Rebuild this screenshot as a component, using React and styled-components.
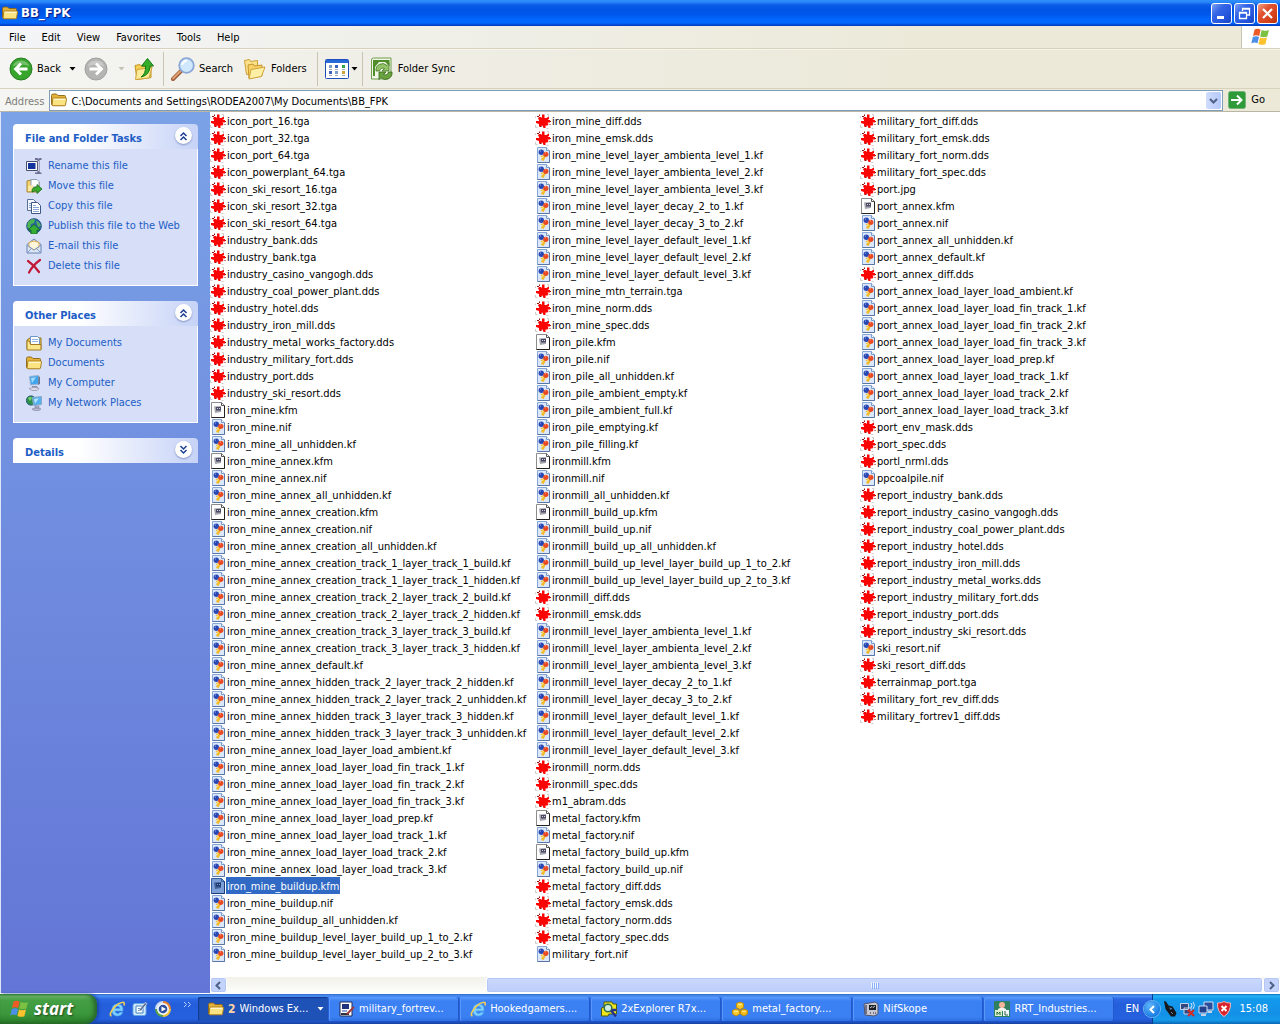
import React from 'react'
import styled, { createGlobalStyle } from 'styled-components'

const GlobalStyle = createGlobalStyle`
    * {
        box-sizing: border-box;
    }
    body {
        margin: 0;
        font-family: "DejaVu Sans Condensed", "DejaVu Sans", sans-serif;
        font-size: 11px;
        line-height: 14px;
        font-variant-ligatures: none;
        color: #000;
    }
    button, input {
        font: inherit;
        font-variant-ligatures: none;
        color: inherit;
        border: 0;
        margin: 0;
        padding: 0;
        background: none;
    }
    ul {
        margin: 0;
        padding: 0;
        list-style: none;
    }
    svg {
        display: block;
        flex: none;
    }
`

const Desktop = styled.div`
    display: flex;
    flex-direction: column;
    width: 100%;
    height: 100vh;
    overflow: hidden;
    background-color: #fff;
`

/* title bar */

const TitleBar = styled.header`
    display: flex;
    align-items: center;
    gap: 3px;
    flex: none;
    height: 26px;
    padding: 0 2px;
    background: linear-gradient(#2f8ffb 0, #2a88f8 2px, #0a5ce8 5px, #0054e3 10px, #0059ee 15px, #0268fe 20px, #0066fd 23px, #0046d0 25px, #0038b8 26px);
`

const WindowTitle = styled.h1`
    flex: 1;
    margin: 0;
    font-size: 13px;
    line-height: 18px;
    font-weight: 700;
    color: #fff;
    text-shadow: 1px 1px 1px #0a1883;
`

const CaptionButton = styled.button`
    display: flex;
    align-items: center;
    justify-content: center;
    width: 21px;
    height: 21px;
    margin-left: -1px;
    border: 1px solid #fff;
    border-radius: 3px;
    background: ${props => props.$close
        ? 'linear-gradient(135deg, #f0a18a, #e0532f 35%, #d5431c 70%, #b8330e)'
        : 'linear-gradient(135deg, #7d9ff3, #3465e6 35%, #2456dd 70%, #1a45c0)'};
`

/* menu and tool bars */

const MenuBar = styled.nav`
    display: flex;
    flex: none;
    height: 23px;
    padding-left: 1px;
    background: linear-gradient(90deg, #f4f5f8, #f0f0ea 30%, #ece9d8 75%);
    border-bottom: 1px solid #d8d2bd;
`

const MenuItem = styled.button`
    padding: 2px 8px 0;
`

const Throbber = styled.div`
    display: flex;
    align-items: center;
    justify-content: center;
    width: 39px;
    margin-left: auto;
    background-color: #fff;
    border-left: 1px solid #c9c5b2;
`

const ToolBar = styled.div`
    display: flex;
    align-items: center;
    flex: none;
    height: 40px;
    padding-left: 5px;
    background: linear-gradient(#fff 0, transparent 1px), linear-gradient(90deg, #f5f5f3, #efeee6 30%, #ece9d8 75%);
    border-bottom: 1px solid #d8d2bd;
`

const ToolButton = styled.button`
    display: flex;
    align-items: center;
    gap: 4px;
    height: 36px;
    padding: 0 ${props => props.$wide ? 6 : 4}px 0 4px;
    white-space: nowrap;
`

const SplitButton = styled(ToolButton)`
    gap: 2px;
    padding-right: 0;
`

const Divider = styled.span`
    width: 1px;
    height: 34px;
    margin: 0 3px 0 4px;
    background-color: #c9c5b2;
`

const AddressBar = styled.div`
    display: flex;
    align-items: center;
    flex: none;
    gap: 5px;
    height: 23px;
    padding: 1px 15px 1px 5px;
    background: linear-gradient(90deg, #f5f5f3, #efeee6 30%, #ece9d8 75%);
    border-bottom: 1px solid #b9b6a5;
`

const AddressLabel = styled.label`
    padding-top: 3px;
    color: #7e7e78;
`

const AddressBox = styled.div`
    display: flex;
    align-items: center;
    flex: 1;
    gap: 4px;
    height: 21px;
    padding: 0 1px;
    border: 1px solid #7f9db9;
    background-color: #fff;
`

const AddressInput = styled.input`
    flex: 1;
    min-width: 0;
    padding-top: 3px;
    outline: none;
`

const DropButton = styled.button`
    display: flex;
    align-items: center;
    justify-content: center;
    width: 15px;
    height: 17px;
    border-radius: 2px;
    background: linear-gradient(90deg, #cfdcfd, #b6c9f8);
`

const GoButton = styled.button`
    display: flex;
    align-items: center;
    gap: 5px;
`

/* side pane */

const Main = styled.main`
    display: flex;
    flex: 1;
    min-height: 0;
    border-bottom: 1px solid #fff;
`

const SidePane = styled.aside`
    display: flex;
    flex-direction: column;
    flex: none;
    gap: 15px;
    width: 210px;
    padding: 12px 12px 0;
    border-left: 1px solid #dfe6f7;
    background: linear-gradient(#7ba2e7, #6375d6);
`

const PanelHeader = styled.div`
    display: flex;
    align-items: center;
    justify-content: space-between;
    height: 25px;
    padding: 0 6px 2px 12px;
    border-radius: 4px 4px 0 0;
    background: linear-gradient(90deg, #fff, #fff 35%, #c6d3f7);
`

const PanelTitle = styled.h2`
    margin: 0;
    padding-top: 7px;
    font-size: 11px;
    font-weight: 700;
    color: #215dc6;
`

const RoundButton = styled.button`
    display: flex;
    align-items: center;
    justify-content: center;
    width: 17px;
    height: 17px;
    border-radius: 50%;
    background-color: #fff;
    box-shadow: 0 1px 2px #8292c4;
`

const PanelBody = styled.ul`
    padding: 7px 12px 9px;
    border: 1px solid #fff;
    border-top: 0;
    background-color: #d6dff7;
`

const TaskLink = styled.a`
    display: flex;
    align-items: center;
    gap: 6px;
    height: 20px;
    line-height: 16px;
    color: #215dc6;
    text-decoration: none;
    white-space: nowrap;
`

/* file list */

const Content = styled.section`
    display: flex;
    flex-direction: column;
    flex: 1;
    min-width: 0;
`

const FileList = styled.ul`
    display: flex;
    flex-flow: column wrap;
    align-content: flex-start;
    flex: 1;
    min-height: 0;
    overflow: hidden;
`

const FileRow = styled.li`
    display: flex;
    align-items: center;
    width: 325px;
    height: 17px;
`

const FileName = styled.span`
    padding: 3px 1px 0;
    white-space: nowrap;
    color: ${props => props.$selected ? '#fff' : '#000'};
    background-color: ${props => props.$selected ? '#316ac5' : 'transparent'};
`

const ScrollBar = styled.div`
    display: flex;
    flex: none;
    height: 16px;
    background: linear-gradient(#f2f1ea, #fdfdfb);
`

const ScrollButton = styled.button`
    display: flex;
    align-items: center;
    justify-content: center;
    width: 17px;
    border: 1px solid #fff;
    border-radius: 3px;
    background-color: #c4d3fc;
    box-shadow: inset 0 0 0 1px #b4c6f4;
`

const ScrollTrack = styled.div`
    display: flex;
    flex: 1;
    justify-content: flex-end;
`

const ScrollThumb = styled.div`
    display: flex;
    align-items: center;
    justify-content: center;
    width: 75%;
    border: 1px solid #fff;
    border-radius: 3px;
    background: linear-gradient(#cbd9fe, #bccdfa);
    box-shadow: inset 0 0 0 1px #b4c6f4;
`

/* taskbar */

const TaskBar = styled.footer`
    display: flex;
    flex: none;
    height: 30px;
    color: #fff;
    background: linear-gradient(#3165c4 0, #4a92f5 2px, #2c68e6 5px, #245edb 10px, #2560de 25px, #1d4fc0 28px, #16409f 30px);
`

const StartButton = styled.button`
    display: flex;
    align-items: center;
    gap: 4px;
    flex: none;
    width: 97px;
    padding-left: 10px;
    border-radius: 0 10px 12px 0;
    font: italic 700 17px/22px "Open Sans", "Liberation Sans", sans-serif;
    text-shadow: 1px 1px 2px #1d4a1d;
    background: linear-gradient(#3c8d3c 0, #6cb56c 2px, #45a045 6px, #3b973b 20px, #2f852f 26px, #256d25 30px);
    box-shadow: inset -3px 0 4px #27652a, 2px 0 3px #1b47a8;
`

const QuickLaunch = styled.div`
    display: flex;
    align-items: center;
    flex: none;
    gap: 7px;
    width: 101px;
    padding-left: 12px;
`

const TaskList = styled.div`
    display: flex;
    flex: 1;
    gap: 1px;
    min-width: 0;
    padding: 3px 0;
`

const TaskButton = styled.button`
    display: flex;
    align-items: center;
    flex: 1 1 0;
    gap: 4px;
    min-width: 0;
    padding: 0 4px 0 10px;
    border-radius: 2px;
    line-height: 16px;
    white-space: nowrap;
    background: ${props => props.$active
        ? '#1e52b7'
        : 'linear-gradient(#5c9bfb 0, #3c81f3 4px, #3b80f2 20px, #2f6fe0 24px)'};
    box-shadow: ${props => props.$active
        ? 'inset 1px 1px 1px #123a8c'
        : 'inset 1px 0 0 #5a98f8, inset -1px 0 0 #2358c9'};
`

const TaskLabel = styled.span`
    flex: 1;
    overflow: hidden;
    text-align: left;
`

const Count = styled.b`
    color: #ffd2a6;
    font-size: 12px;
`

const Language = styled.span`
    display: flex;
    align-items: center;
    width: 27px;
    margin-left: 11px;
`

const Tray = styled.div`
    display: flex;
    align-items: center;
    flex: none;
    gap: 2px;
    padding-right: 12px;
    background: linear-gradient(#1070c4 0, #25b3f5 2px, #139aec 5px, #1290e8 20px, #159bea 26px, #0b66b5 30px);
    border-left: 1px solid #0a3f8f;
`

const TrayToggle = styled.button`
    display: flex;
    align-items: center;
    justify-content: center;
    width: 16px;
    height: 16px;
    margin-left: -9px;
    border-radius: 50%;
    background: radial-gradient(circle at 35% 30%, #5fb4fb, #1b7fe4 70%);
    box-shadow: 0 0 0 1px #6fb2f2;
`

const Clock = styled.time`
    padding-left: 5px;
`

/* icons */

const Folder = ({ size = 16 }) => (
    <svg width={size} height={size} viewBox="0 0 16 16">
        <path d="M.500 3.500q0-1.500 1.500-1.500h3.500l1.500 1.500h6.500q1 0 1 1v8.500l-1 .5H1.500l-1-1z" fill="#e4b23a" stroke="#8a6414" strokeWidth=".9" />
        <path d="M2.500 6h12.300q1 0 .8.900l-1.100 6q-.2.900-1 .9H2q-.9 0-.8-.9l.5-6q.1-.9.800-.9z" fill="#fbe382" stroke="#a87a1b" strokeWidth=".9" />
        <path d="M2.800 7.300h11.500" stroke="#fffbe0" />
    </svg>
)

const Flag = ({ size = 20 }) => (
    <svg width={size} height={size} viewBox="0 0 20 20">
        <path d="M3.600 2.500Q6.500.800 9.600 2.600L8.200 9Q5 7.500 2 9z" fill="#ee5a25" />
        <path d="M10.600 3.100q3.200 1.500 7.400-.2L16.300 9.500q-3.600 1.500-7.100 0z" fill="#7cc142" />
        <path d="M1.800 10q3.300-1.600 6.200 0l-1.500 6.300q-3-1.500-6.200.2z" fill="#4b8fe8" />
        <path d="M9 10.500q3.500 1.600 7 .1L14.400 17.200q-3.500 1.400-6.900-.2z" fill="#fbc22d" />
    </svg>
)

const Splat = () => (
    <svg width="16" height="16" viewBox="0 0 16 16">
        <path d="M.500 5V3.500M12 1.500h1.500V4M.500 12v2.500h2M11.500 15.500h2" stroke="#cfcaca" fill="none" />
        <path d="M4 4h2l1 1V1.500h2.500V5h2l1.500-1h1v2l-1.500 1H15v2.500h-2.500l1 1.500-1 1.500h-2V15H8.500l-1-2.500H7L5.500 14 4 13.500v-2.500L1 10V8h3V7L3 5.500z" fill="#fb0404" />
        <path d="M2 3.500h2M4.500 1.500V3M14.500 11.500h1M15.500 8v1M5 13.500h1.500" stroke="#8e1414" fill="none" />
    </svg>
)

const Balls = () => (
    <svg width="16" height="16" viewBox="0 0 16 16">
        <path d="M2.500.500h9l3 3v12h-12z" fill="#dbe8fc" stroke="#86a6d8" />
        <path d="M11.500.500v3h3" fill="#f3f8ff" stroke="#7b9bc9" />
        <path d="M14.500 4v11.500h-12" fill="none" stroke="#5a76a6" />
        <path d="M5.500 9l4-1 1 2.500L8.500 14 6 13l1-2.500z" fill="#f1bb2b" />
        <circle cx="6.300" cy="5.300" r="2.700" fill="#2a48b4" />
        <circle cx="10.800" cy="7.300" r="2.600" fill="#ea4a22" />
        <path d="M5 4.500l1-.8" stroke="#93a9f0" />
        <path d="M10 6.300l1-.8" stroke="#f9a78a" />
        <path d="M7 10.500l1.500-1" stroke="#fff3a8" />
    </svg>
)

const KfmFile = ({ selected }) => (
    <svg width="16" height="16" viewBox="0 0 16 16">
        <path d="M1.500.500h10l3 3v12h-13z" fill={selected ? '#7da0d8' : '#fff'} stroke={selected ? '#375f9f' : '#8c8c8c'} />
        <path d="M14.500 3.500v12h-13" fill="none" stroke={selected ? '#1c3a75' : '#222'} />
        <path d="M11.500.500v3h3" fill="none" stroke={selected ? '#375f9f' : '#555'} />
        <path d="M4 4.500l7-.5v6l-6 1z" fill={selected ? '#41619b' : '#a5a5ad'} />
        <path d="M6 5h5v3.500H6z" fill={selected ? '#203a70' : '#4b4b63'} />
        <path d="M7 6.500h1m1 0h1" stroke={selected ? '#8aa6d8' : '#d4d4e4'} />
    </svg>
)

const Caret = ({ color = '#000' }) => (
    <svg width="7" height="4" viewBox="0 0 7 4"><path d="M.500 0h6L3.500 3.500z" fill={color} /></svg>
)

const Chevron = ({ d, color = '#4d6185', size = 9 }) => (
    <svg width={size} height={size} viewBox="0 0 9 9"><path d={d} fill="none" stroke={color} strokeWidth="2" /></svg>
)

const DoubleChevron = ({ down }) => (
    <svg width="9" height="10" viewBox="0 0 9 10">
        <path d={down ? 'M1.500 1l3 3 3-3M1.500 5l3 3 3-3' : 'M1.500 5l3-3 3 3M1.500 9l3-3 3 3'} fill="none" stroke="#1c3f94" strokeWidth="1.500" />
    </svg>
)

const NavCircle = ({ fill, edge, back }) => (
    <svg width="24" height="24" viewBox="0 0 24 24">
        <circle cx="12" cy="12" r="11" fill={fill} stroke={edge} />
        <path d="M3.500 9.500a9 9 0 0 1 17 0q-8-4-17 0z" fill="#fff" opacity=".3" />
        <path d={back ? 'M18.500 12H7M12 6.500L6.500 12l5.500 5.500' : 'M5.500 12H17M12 6.500l5.500 5.500-5.500 5.500'} fill="none" stroke="#fff" strokeWidth="2.800" />
    </svg>
)

const UpFolder = () => (
    <svg width="22" height="24" viewBox="0 0 22 24">
        <path d="M2 8.500l5-1 2 2 9-1v12L4 22.500z" fill="#f5cf52" stroke="#c19424" />
        <path d="M4 12.500l15-2-3 10.500L2.500 22.500z" fill="#fdeb98" stroke="#d0a238" />
        <path d="M8 20q5-3 4.500-11H8.500L14.500 1.500 20.500 9H17q0 9-9 11z" fill="#35ad2b" stroke="#157a17" />
    </svg>
)

const Magnifier = () => (
    <svg width="24" height="24" viewBox="0 0 24 24">
        <path d="M9.500 14.500L2 22" stroke="#9b5a38" strokeWidth="4" strokeLinecap="round" />
        <path d="M9 14.500l-7 7" stroke="#e3a070" strokeWidth="2" strokeLinecap="round" />
        <circle cx="15.500" cy="8.500" r="7.300" fill="#cfe8fc" stroke="#8ba7d8" strokeWidth="1.800" />
        <path d="M11 8q1-4 5-4.500" stroke="#fff" strokeWidth="2" fill="none" />
    </svg>
)

const FoldersIcon = () => (
    <svg width="24" height="24" viewBox="0 0 24 24">
        <path d="M1.500 3.500l5-1 1 2 7-1v12l-11 2z" fill="#fbe28a" stroke="#cf9f35" />
        <path d="M5 8l5-1 1.500 2 7.500-1v11L6 21.500z" fill="#f7d264" stroke="#c8942b" />
        <path d="M8 12.500l14-2.500-3.500 9.500L6 22z" fill="#fdeea5" stroke="#d0a238" />
    </svg>
)

const ViewsIcon = () => (
    <svg width="24" height="20" viewBox="0 0 24 20">
        <rect x=".5" y=".5" width="23" height="19" rx="1" fill="#fff" stroke="#1d4fb8" />
        <path d="M1 1h22v3H1z" fill="#2668d8" />
        <path d="M4 6h3v3H4zM10 12h3v3h-3z" fill="#7d9cc4" />
        <path d="M10 6h3v3h-3zM4 12h3v3H4z" fill="#3c62bd" />
        <path d="M17 6h3v3h-3z" fill="#2ea24d" />
        <path d="M17 12h3v3h-3z" fill="#d0a537" />
        <path d="M4 10.500h3m3 0h3m4 0h3M4 16.500h3m3 0h3m4 0h3" stroke="#a6aab8" />
    </svg>
)

const SyncIcon = () => (
    <svg width="24" height="24" viewBox="0 0 24 24">
        <path d="M1.500 3q0-2 2-2h17.500v18l-3 3H1.500z" fill="#f1f6e6" stroke="#6f9d4b" />
        <path d="M3 3h16.500v6L15 5H9l-4 5v9H3z" fill="#4f8d2a" />
        <path d="M6 14a6.500 6.500 0 0 1 11-5.500l2-2V14h-7l2.500-2.500A3.500 3.500 0 0 0 9.500 14z" fill="#93c268" stroke="#3f7721" strokeWidth=".8" />
        <path d="M22 15a6.500 6.500 0 0 1-11 5.500l-2 2V15h7l-2.500 2.500a3.500 3.500 0 0 0 5-2.500z" fill="#6aa33f" stroke="#346719" strokeWidth=".8" />
    </svg>
)

const GoIcon = () => (
    <svg width="18" height="18" viewBox="0 0 18 18">
        <rect x=".5" y=".5" width="17" height="17" rx="2" fill="#2f9a3a" stroke="#73b578" />
        <path d="M3 9h10M9 4.500L13.500 9 9 13.500" fill="none" stroke="#fff" strokeWidth="2" />
    </svg>
)

const smallIcons = {
    rename: (
        <>
            <path d="M.500 3.500h11v9H.500z" fill="#fff" stroke="#44506b" />
            <path d="M2 5h7.500v6H2z" fill="#12349d" />
            <path d="M9 1h2l1.500 1L14 1h1.500M12.500 2v12M9 15.500h2l1.500-1 1.500 1h1.500" fill="none" stroke="#6d6f94" strokeWidth="2" />
            <path d="M12.500 3v10" stroke="#d0d0e2" />
        </>
    ),
    move: (
        <>
            <path d="M1 3l4-1 1 2h7v10H1z" fill="#f5d36c" stroke="#a88534" />
            <path d="M5 1.500h6l2 2V9H5z" fill="#fff" stroke="#8fa1bd" />
            <path d="M2 8l5-1v6H2z" fill="#fbe9a0" />
            <path d="M6 13q0-4 5-4V6.500l5 4.500-5 4.500V13q-2-.5-5 1z" fill="#3bae2f" stroke="#176a18" strokeWidth=".8" />
        </>
    ),
    copy: (
        <>
            <path d="M1.500 1.500h6l3 3v8h-9z" fill="#f1f6ff" stroke="#5a7096" />
            <path d="M5.500 4.500h6l3 3v8h-9z" fill="#fff" stroke="#3f5680" />
            <path d="M7 9.500h6M7 11.500h6M7 13.500h6M7 7.500h3M3 5.500h2M3 7.500h2M3 9.500h2" stroke="#88a4d4" />
        </>
    ),
    publish: (
        <>
            <circle cx="8" cy="8" r="7.300" fill="#24679f" stroke="#1f4f86" />
            <path d="M2 4q4-4 7-2.500L8 5 5 6 4 11 1 9z" fill="#4db551" />
            <path d="M10 3q3 0 5 5l-3 1z" fill="#57b25a" />
            <path d="M8 6.500l6 5.500H11v4H5v-4H2z" fill="#35ae33" stroke="#166a1b" strokeWidth=".8" />
        </>
    ),
    mail: (
        <>
            <path d="M1 6.500L8 1l7 5.500v8.500H1z" fill="#dbe6f8" stroke="#6783b0" />
            <path d="M3 4.500q5-3 10 0V9l-5 3-5-3z" fill="#fff7dc" stroke="#dfa94e" />
            <path d="M1 7l7 5 7-5M1 15l5-5M15 15l-5-5" fill="none" stroke="#7f9bc8" />
        </>
    ),
    remove: <path d="M2 3q6 4 11 11M14 2Q7 7 3 14.500" fill="none" stroke="#c01837" strokeWidth="2.200" strokeLinecap="round" />,
    documents: (
        <>
            <path d="M1 5l3-2h11v11H1z" fill="#f1c84d" stroke="#93701c" />
            <path d="M4.500 1.500h7l2 2v8h-9z" fill="#fff" stroke="#6e95c9" />
            <path d="M6 4.500h6M6 6.500h6" stroke="#93b6e6" />
            <path d="M1 6h2.500l1 3.500h10.500V15H1z" fill="#fce68a" stroke="#a37a20" />
        </>
    ),
    computer: (
        <>
            <path d="M3.500 1.500l9-1v8.500l-8 1z" fill="#3fa5ee" stroke="#9ab3d1" />
            <path d="M5 3l5-.8L6 8z" fill="#a5dcfb" />
            <path d="M12.500 1l1.500 1v7l-2 1z" fill="#6a7793" />
            <path d="M6 11h5l1 2H6z" fill="#8a8fac" />
            <path d="M3 13.500q5-2.500 10 0l-2 2H6z" fill="#dcdce9" stroke="#9090aa" strokeWidth=".7" />
        </>
    ),
    network: (
        <>
            <circle cx="5" cy="5.500" r="4.600" fill="#2e8f4d" stroke="#1d5c70" />
            <path d="M2 3q3-2 4 0L4 6z" fill="#7bd071" />
            <path d="M6.500 2.500l9-1v8l-8 1z" fill="#54b1ef" stroke="#8ca9ca" />
            <path d="M8 4l5-.8L9 8.500z" fill="#b9e4fc" />
            <path d="M9 11h4v2H9zM6 14q4-2.500 9 0l-2 1.500H8z" fill="#b8bad0" stroke="#7f80a0" strokeWidth=".6" />
        </>
    ),
    ie: (
        <>
            <path d="M14 10H6q.2 2.500 2.600 2.500 1.700 0 2.400-1.200h2.800Q12.500 15 8.600 15 3 15 3 9t5.600-6Q14.500 3 14 10zM6 7.500h5Q10.700 5.200 8.500 5.200T6 7.500z" fill="#7fd0ff" stroke="#4aa5f2" strokeWidth=".7" />
            <path d="M2.500 15Q-.5 14 4 8t9-6.500q3-1 2 3" fill="none" stroke="#f1ce54" strokeWidth="1.600" />
        </>
    ),
    desktop: (
        <>
            <rect x="1" y="2.500" width="13" height="12" rx="2" fill="#d3eafc" stroke="#64a7e4" />
            <path d="M4 5h7v7H4z" fill="#fff" stroke="#3d80c8" />
            <path d="M6 7.500h3M6 9.500h3" stroke="#5b8fca" />
            <path d="M7 9l6-7.500 2 1L9 10z" fill="#5b6d90" stroke="#eef5fd" strokeWidth=".6" />
        </>
    ),
    media: (
        <>
            <circle cx="8" cy="8" r="7" fill="#f3f6fb" />
            <path d="M8 1a7 7 0 0 1 7 7" fill="none" stroke="#e9812f" strokeWidth="2" />
            <path d="M15 8a7 7 0 0 1-7 7" fill="none" stroke="#f2c539" strokeWidth="2" />
            <path d="M8 15a7 7 0 0 1-7-7" fill="none" stroke="#57a148" strokeWidth="2" />
            <path d="M1 8a7 7 0 0 1 7-7" fill="none" stroke="#c9d9ef" strokeWidth="2" />
            <circle cx="8" cy="8" r="4.300" fill="#2b4e9f" />
            <path d="M6.500 5.500v5L11 8z" fill="#fff" />
        </>
    ),
    picture: (
        <>
            <path d="M1 1h12v14H1z" fill="#fff" stroke="#222a55" />
            <path d="M3 3h7v5H3z" fill="#21337f" />
            <path d="M3 9h5v2H3z" fill="#8ea6d5" />
            <path d="M2 13h8" stroke="#30303d" strokeWidth="2" />
            <path d="M15 6L8 13" stroke="#a33c3c" strokeWidth="2" />
        </>
    ),
    explorer: (
        <>
            <path d="M3 1h8l1 2h3.500v10H8l-1 2H.500V7L3 6z" fill="#f1e51b" stroke="#4f5a10" />
            <circle cx="7" cy="7" r="3.800" fill="#d3eee2" stroke="#2d7051" strokeWidth="1.500" />
            <path d="M10 9.500l5 6M11 9h4" stroke="#27348d" strokeWidth="2.500" />
        </>
    ),
    metal: (
        <>
            <path d="M8 1l3.500 1.500v4L8 8.500l-3.500-2v-4z" fill="#f7c82b" stroke="#c48d08" />
            <path d="M4 8l3.500 1.500v3.500L4 15 .5 13V9.500z" fill="#f7c82b" stroke="#c48d08" />
            <path d="M12 8l3.500 1.500v3.500L12 15l-3.500-2V9.500z" fill="#f2b91a" stroke="#c48d08" />
            <path d="M6 3l2 .8 2-.8M2 10l2 .8L6 10M10 10l2 .8 2-.8" stroke="#fff1a0" fill="none" />
        </>
    ),
    nifskope: (
        <>
            <path d="M1 3l11-2 3 2v10l-4 2-9-1z" fill="#c7c8d1" stroke="#51536a" />
            <path d="M6 4h7v5H6z" fill="#191c24" />
            <path d="M7 7l2-1.500 1 1 2-1.500" stroke="#c9d4c9" fill="none" />
            <path d="M3 4v9M7 12h1m2 0h1m1 0h1" stroke="#55576b" strokeWidth="1.500" />
        </>
    ),
    industries: (
        <>
            <path d="M0 0h16v16H0z" fill="#2f8060" />
            <circle cx="8" cy="4" r="3" fill="#f3b59a" />
            <path d="M4 8q4-3 8 0v2H4z" fill="#f6f0ee" />
            <path d="M1 9h7v6H1z" fill="#d9f0cc" />
            <path d="M9 9h6v6H9z" fill="#f1f5ff" />
            <path d="M3 14v-3l1.500 1.500L6 11v3M11 10v4h3" stroke="#26622f" fill="none" />
        </>
    ),
    phone: (
        <>
            <path d="M2 0l2 .5 2.500 4 4 1 4 6.500-1.500 3.500h-4L3.500 8z" fill="#17181c" />
            <path d="M7 6.500l3 .5-1 2z" fill="#5a8cc4" />
            <path d="M9 11l2 2" stroke="#85878f" />
        </>
    ),
    offline: (
        <>
            <path d="M.500 2.500h8v6h-8zM4 7h7v6H4z" fill="#33477f" stroke="#c4d1ea" />
            <path d="M11 2q2 2 0 5M13 1q3 3 0 7" stroke="#d7e5f7" fill="none" />
            <path d="M8 9l6 6M14 9l-6 6" stroke="#d5281e" strokeWidth="2" />
        </>
    ),
    lan: (
        <>
            <path d="M6 1h9v8H6z" fill="#2c4d9a" stroke="#d2dff3" />
            <path d="M1 5h8v7H1z" fill="#23428d" stroke="#d2dff3" />
            <path d="M3 14h5M10 11h4" stroke="#c6d0e4" strokeWidth="2" />
        </>
    ),
    shield: (
        <>
            <path d="M8 .500Q10 2 14.500 2 15 11 8 15.500 1 11 1.500 2 6 2 8 .500z" fill="#d8232a" stroke="#f3b7b5" />
            <path d="M5.500 5l5 5M10.500 5l-5 5" stroke="#fff" strokeWidth="2" />
        </>
    ),
}

const SmallIcon = ({ name }) => (
    <svg width="16" height="16" viewBox="0 0 16 16">{smallIcons[name]}</svg>
)

/* data */

const menus = ['File', 'Edit', 'View', 'Favorites', 'Tools', 'Help']

const panels = [
    {
        title: 'File and Folder Tasks',
        items: [
            ['rename', 'Rename this file'],
            ['move', 'Move this file'],
            ['copy', 'Copy this file'],
            ['publish', 'Publish this file to the Web'],
            ['mail', 'E-mail this file'],
            ['remove', 'Delete this file'],
        ],
    },
    {
        title: 'Other Places',
        items: [
            ['documents', 'My Documents'],
            ['folder', 'Documents'],
            ['computer', 'My Computer'],
            ['network', 'My Network Places'],
        ],
    },
    { title: 'Details', items: [] },
]

const files = `
icon_port_16.tga icon_port_32.tga icon_port_64.tga icon_powerplant_64.tga
icon_ski_resort_16.tga icon_ski_resort_32.tga icon_ski_resort_64.tga
industry_bank.dds industry_bank.tga industry_casino_vangogh.dds
industry_coal_power_plant.dds industry_hotel.dds industry_iron_mill.dds
industry_metal_works_factory.dds industry_military_fort.dds industry_port.dds
industry_ski_resort.dds iron_mine.kfm iron_mine.nif iron_mine_all_unhidden.kf
iron_mine_annex.kfm iron_mine_annex.nif iron_mine_annex_all_unhidden.kf
iron_mine_annex_creation.kfm iron_mine_annex_creation.nif
iron_mine_annex_creation_all_unhidden.kf
iron_mine_annex_creation_track_1_layer_track_1_build.kf
iron_mine_annex_creation_track_1_layer_track_1_hidden.kf
iron_mine_annex_creation_track_2_layer_track_2_build.kf
iron_mine_annex_creation_track_2_layer_track_2_hidden.kf
iron_mine_annex_creation_track_3_layer_track_3_build.kf
iron_mine_annex_creation_track_3_layer_track_3_hidden.kf
iron_mine_annex_default.kf
iron_mine_annex_hidden_track_2_layer_track_2_hidden.kf
iron_mine_annex_hidden_track_2_layer_track_2_unhidden.kf
iron_mine_annex_hidden_track_3_layer_track_3_hidden.kf
iron_mine_annex_hidden_track_3_layer_track_3_unhidden.kf
iron_mine_annex_load_layer_load_ambient.kf
iron_mine_annex_load_layer_load_fin_track_1.kf
iron_mine_annex_load_layer_load_fin_track_2.kf
iron_mine_annex_load_layer_load_fin_track_3.kf
iron_mine_annex_load_layer_load_prep.kf
iron_mine_annex_load_layer_load_track_1.kf
iron_mine_annex_load_layer_load_track_2.kf
iron_mine_annex_load_layer_load_track_3.kf
iron_mine_buildup.kfm iron_mine_buildup.nif iron_mine_buildup_all_unhidden.kf
iron_mine_buildup_level_layer_build_up_1_to_2.kf
iron_mine_buildup_level_layer_build_up_2_to_3.kf
iron_mine_diff.dds iron_mine_emsk.dds
iron_mine_level_layer_ambienta_level_1.kf
iron_mine_level_layer_ambienta_level_2.kf
iron_mine_level_layer_ambienta_level_3.kf
iron_mine_level_layer_decay_2_to_1.kf iron_mine_level_layer_decay_3_to_2.kf
iron_mine_level_layer_default_level_1.kf
iron_mine_level_layer_default_level_2.kf
iron_mine_level_layer_default_level_3.kf
iron_mine_mtn_terrain.tga iron_mine_norm.dds iron_mine_spec.dds
iron_pile.kfm iron_pile.nif iron_pile_all_unhidden.kf
iron_pile_ambient_empty.kf iron_pile_ambient_full.kf
iron_pile_emptying.kf iron_pile_filling.kf
ironmill.kfm ironmill.nif ironmill_all_unhidden.kf
ironmill_build_up.kfm ironmill_build_up.nif ironmill_build_up_all_unhidden.kf
ironmill_build_up_level_layer_build_up_1_to_2.kf
ironmill_build_up_level_layer_build_up_2_to_3.kf
ironmill_diff.dds ironmill_emsk.dds
ironmill_level_layer_ambienta_level_1.kf
ironmill_level_layer_ambienta_level_2.kf
ironmill_level_layer_ambienta_level_3.kf
ironmill_level_layer_decay_2_to_1.kf ironmill_level_layer_decay_3_to_2.kf
ironmill_level_layer_default_level_1.kf
ironmill_level_layer_default_level_2.kf
ironmill_level_layer_default_level_3.kf
ironmill_norm.dds ironmill_spec.dds m1_abram.dds
metal_factory.kfm metal_factory.nif metal_factory_build_up.kfm
metal_factory_build_up.nif metal_factory_diff.dds metal_factory_emsk.dds
metal_factory_norm.dds metal_factory_spec.dds military_fort.nif
military_fort_diff.dds military_fort_emsk.dds military_fort_norm.dds
military_fort_spec.dds port.jpg port_annex.kfm port_annex.nif
port_annex_all_unhidden.kf port_annex_default.kf port_annex_diff.dds
port_annex_load_layer_load_ambient.kf
port_annex_load_layer_load_fin_track_1.kf
port_annex_load_layer_load_fin_track_2.kf
port_annex_load_layer_load_fin_track_3.kf
port_annex_load_layer_load_prep.kf
port_annex_load_layer_load_track_1.kf
port_annex_load_layer_load_track_2.kf
port_annex_load_layer_load_track_3.kf
port_env_mask.dds port_spec.dds portl_nrml.dds ppcoalpile.nif
report_industry_bank.dds report_industry_casino_vangogh.dds
report_industry_coal_power_plant.dds report_industry_hotel.dds
report_industry_iron_mill.dds report_industry_metal_works.dds
report_industry_military_fort.dds report_industry_port.dds
report_industry_ski_resort.dds ski_resort.nif ski_resort_diff.dds
terrainmap_port.tga military_fort_rev_diff.dds military_fortrev1_diff.dds
`.trim().split(/\s+/)

const selectedFile = 'iron_mine_buildup.kfm'

const tasks = [
    ['picture', 'military_fortrev...'],
    ['ie', 'Hookedgamers....'],
    ['explorer', '2xExplorer R7x...'],
    ['metal', 'metal_factory....'],
    ['nifskope', 'NifSkope'],
    ['industries', 'RRT_Industries...'],
]

const FileIcon = ({ name, selected }) => {
    if (name.endsWith('.kfm')) return <KfmFile selected={selected} />
    if (name.endsWith('.nif') || name.endsWith('.kf')) return <Balls />
    return <Splat />
}

const Panel = ({ title, items }) => (
    <section>
        <PanelHeader>
            <PanelTitle>{title}</PanelTitle>
            <RoundButton aria-label={'Toggle ' + title}>
                <DoubleChevron down={items.length === 0} />
            </RoundButton>
        </PanelHeader>
        {items.length > 0 && (
            <PanelBody>
                {items.map(([icon, label]) => (
                    <li key={label}>
                        <TaskLink href="#">
                            {icon === 'folder' ? <Folder /> : <SmallIcon name={icon} />}
                            {label}
                        </TaskLink>
                    </li>
                ))}
            </PanelBody>
        )}
    </section>
)

const App = () => {
    return (
        <Desktop>
            <GlobalStyle />
            <TitleBar>
                <Folder />
                <WindowTitle>BB_FPK</WindowTitle>
                <CaptionButton aria-label="Minimize">
                    <svg width="15" height="15" viewBox="0 0 15 15"><path d="M3 10h7v3H3z" fill="#fff" /></svg>
                </CaptionButton>
                <CaptionButton aria-label="Restore">
                    <svg width="15" height="15" viewBox="0 0 15 15">
                        <path d="M5.500 5V2.500h7V9H10M5 3h8M2.500 6.500h7v6h-7zM2 7h8" fill="none" stroke="#fff" strokeWidth="1.300" />
                    </svg>
                </CaptionButton>
                <CaptionButton $close aria-label="Close">
                    <svg width="15" height="15" viewBox="0 0 15 15"><path d="M3 3l9 9M12 3l-9 9" stroke="#fff" strokeWidth="2.200" /></svg>
                </CaptionButton>
            </TitleBar>
            <MenuBar>
                {menus.map(item => <MenuItem key={item}>{item}</MenuItem>)}
                <Throbber><Flag /></Throbber>
            </MenuBar>
            <ToolBar>
                <ToolButton><NavCircle back fill="#37a42c" edge="#2a7d22" />Back</ToolButton>
                <ToolButton aria-label="Back history"><Caret /></ToolButton>
                <ToolButton $wide aria-label="Forward"><NavCircle fill="#b4b4b2" edge="#a0a09e" /></ToolButton>
                <ToolButton aria-label="Forward history"><Caret color="#c4c2b6" /></ToolButton>
                <ToolButton aria-label="Up"><UpFolder /></ToolButton>
                <Divider />
                <ToolButton $wide><Magnifier />Search</ToolButton>
                <ToolButton $wide><FoldersIcon />Folders</ToolButton>
                <Divider />
                <SplitButton aria-label="Views"><ViewsIcon /><Caret /></SplitButton>
                <Divider />
                <ToolButton><SyncIcon />Folder Sync</ToolButton>
            </ToolBar>
            <AddressBar>
                <AddressLabel htmlFor="address">Address</AddressLabel>
                <AddressBox>
                    <Folder />
                    <AddressInput id="address" defaultValue="C:\Documents and Settings\RODEA2007\My Documents\BB_FPK" />
                    <DropButton aria-label="Show addresses"><Chevron d="M1 3l3.500 3.500L8 3" /></DropButton>
                </AddressBox>
                <GoButton><GoIcon />Go</GoButton>
            </AddressBar>
            <Main>
                <SidePane>
                    {panels.map(panel => <Panel key={panel.title} {...panel} />)}
                </SidePane>
                <Content>
                    <FileList>
                        {files.map(name => (
                            <FileRow key={name}>
                                <FileIcon name={name} selected={name === selectedFile} />
                                <FileName $selected={name === selectedFile}>{name}</FileName>
                            </FileRow>
                        ))}
                    </FileList>
                    <ScrollBar>
                        <ScrollButton aria-label="Scroll left"><Chevron d="M6 1L2.500 4.500 6 8" /></ScrollButton>
                        <ScrollTrack>
                            <ScrollThumb>
                                <svg width="8" height="7" viewBox="0 0 8 7">
                                    <path d="M.500 0v6M2.500 0v6M4.500 0v6M6.500 0v6" stroke="#eef4fe" />
                                    <path d="M1.500 1v6M3.500 1v6M5.500 1v6M7.500 1v6" stroke="#8cb0f8" />
                                </svg>
                            </ScrollThumb>
                        </ScrollTrack>
                        <ScrollButton aria-label="Scroll right"><Chevron d="M3 1l3.500 3.500L3 8" /></ScrollButton>
                    </ScrollBar>
                </Content>
            </Main>
            <TaskBar>
                <StartButton><Flag />start</StartButton>
                <QuickLaunch>
                    <SmallIcon name="ie" />
                    <SmallIcon name="desktop" />
                    <SmallIcon name="media" />
                    <svg width="18" height="16" viewBox="0 0 18 16">
                        <path d="M6 1l2.500 2.500L6 6M10 1l2.500 2.500L10 6" fill="none" stroke="#b5d2fb" />
                    </svg>
                </QuickLaunch>
                <TaskList>
                    <TaskButton $active>
                        <Folder />
                        <Count>2</Count>
                        <TaskLabel>Windows Ex...</TaskLabel>
                        <Caret color="#fff" />
                    </TaskButton>
                    {tasks.map(([icon, label]) => (
                        <TaskButton key={label}>
                            <SmallIcon name={icon} />
                            <TaskLabel>{label}</TaskLabel>
                        </TaskButton>
                    ))}
                </TaskList>
                <Language>EN</Language>
                <Tray>
                    <TrayToggle aria-label="Show hidden icons"><Chevron color="#fff" d="M6 1L2.500 4.500 6 8" /></TrayToggle>
                    <SmallIcon name="phone" />
                    <SmallIcon name="offline" />
                    <SmallIcon name="lan" />
                    <SmallIcon name="shield" />
                    <Clock>15:08</Clock>
                </Tray>
            </TaskBar>
        </Desktop>
    )
}

export default App
